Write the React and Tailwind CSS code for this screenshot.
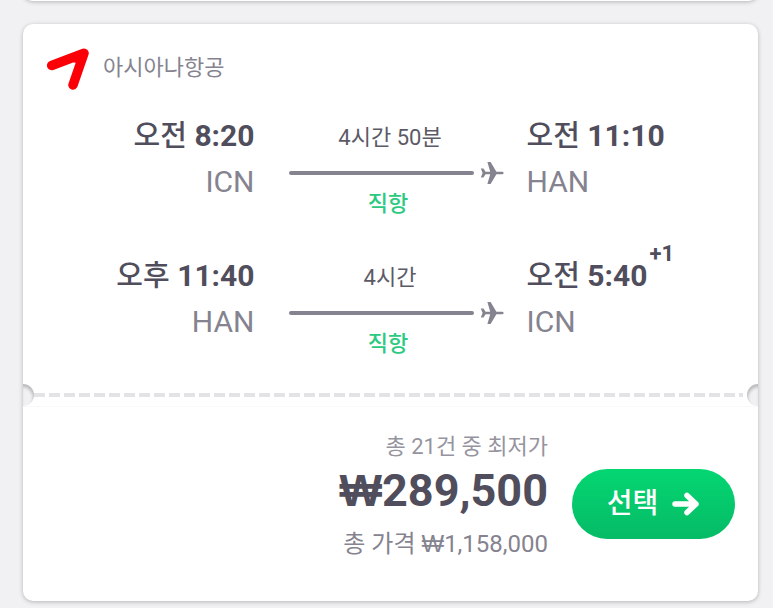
import React from "react";

const flights = [
  {
    departPeriod: "오전",
    departTime: "8:20",
    departCode: "ICN",
    duration: "4시간 50분",
    arrivePeriod: "오전",
    arriveTime: "11:10",
    arriveCode: "HAN",
  },
  {
    departPeriod: "오후",
    departTime: "11:40",
    departCode: "HAN",
    duration: "4시간",
    arrivePeriod: "오전",
    arriveTime: "5:40",
    arriveCode: "ICN",
    dayOffset: "+1",
  },
];

const AirlineLogo = () => (
  <svg width="44" height="44" viewBox="0 0 44 44" aria-hidden="true">
    <path
      d="M4.7 19.5L37 7.3L26 39"
      fill="none"
      stroke="#fb0007"
      strokeWidth="9.5"
      strokeLinecap="round"
      strokeLinejoin="round"
    />
    <path d="M20 14L37 7L30 28L29 17Z" fill="#fb0007" />
  </svg>
);

const PlaneIcon = () => (
  <svg width="24" height="26" viewBox="0 0 24 26" fill="#85838f" aria-hidden="true">
    <path d="M22.5 11.8H16.4L10.6 2H7.4L10.2 11.8H5.6L3.4 8.6H.8L2.6 13 .8 17.4H3.4L5.6 14.2H10.2L7.4 24H10.6L16.4 14.2H22.5C24 14.2 24 11.8 22.5 11.8Z" />
  </svg>
);

const ArrowIcon = () => (
  <svg width="28" height="24" viewBox="0 0 28 24" aria-hidden="true">
    <path
      d="M3 12H23M15 3.5L24 12L15 20.5"
      fill="none"
      stroke="#fff"
      strokeWidth="5.5"
      strokeLinecap="round"
      strokeLinejoin="round"
    />
  </svg>
);

const FlightTime = ({ period, time }) => (
  <>
    <span className="text-[29px] font-medium">{period}</span> {time}
  </>
);

const WonSign = () => <span className="font-['Liberation_Sans']">₩</span>;

const FlightRow = ({ flight }) => {
  return (
    <div className="grid grid-cols-[1fr_272px_1fr] whitespace-nowrap">
      <div className="text-right">
        <p className="h-[46px] text-[30px] leading-[46px] font-bold text-[#504e5c]">
          <FlightTime period={flight.departPeriod} time={flight.departTime} />
        </p>
        <p className="text-[30px] leading-[46px] text-[#85838f]">
          {flight.departCode}
        </p>
      </div>

      <div className="flex flex-col pl-[34px] pr-[23px]">
        <p className="h-[46px] pr-3 text-center text-[22px] leading-[50px] text-[#5c5a66]">
          {flight.duration}
        </p>
        <div className="flex h-7 items-center gap-[6px]">
          <div className="h-1 flex-1 rounded-full bg-[#85838f]" />
          <PlaneIcon />
        </div>
        <p className="pr-4 text-center text-[22px] leading-[34px] font-medium text-[#2cc981]">
          직항
        </p>
      </div>

      <div>
        <p className="h-[46px] text-[30px] leading-[46px] font-bold text-[#504e5c]">
          <span className="relative">
            <FlightTime period={flight.arrivePeriod} time={flight.arriveTime} />
            {flight.dayOffset && (
              <sup className="absolute -top-4 left-full ml-0.5 text-[22px] leading-6">
                {flight.dayOffset}
              </sup>
            )}
          </span>
        </p>
        <p className="text-[30px] leading-[46px] text-[#85838f]">
          {flight.arriveCode}
        </p>
      </div>
    </div>
  );
};

const Perforation = () => (
  <div className="flex h-[22px] items-center">
    <div className="h-full w-[11px] rounded-r-full bg-[#f1f1f3] shadow-[inset_-1px_3px_3px_#bdbdc1]" />
    <div className="mr-1 h-1 flex-1 bg-[repeating-linear-gradient(90deg,#e3e3e5_0_11px,transparent_11px_15px)]" />
    <div className="h-full w-[11px] rounded-l-full bg-[#f1f1f3] shadow-[inset_1px_3px_3px_#bdbdc1]" />
  </div>
);

const App = () => {
  return (
    <main className="flex min-h-screen flex-col bg-[#f1f1f3] pr-[15px] pb-[7px] pl-[23px] font-[Roboto,'Noto_Sans_CJK_KR',sans-serif]">
      {/* bottom edge of the previous ticket */}
      <div className="-mt-[31px] mb-[23px] h-8 shrink-0 rounded-[10px] bg-white shadow-[0_1px_4px_#b4b4b8]" />

      <article className="rounded-[10px] bg-white shadow-[0_1px_4px_#b4b4b8]">
        <header className="flex items-center gap-3 pt-[22px] pb-[23px] pl-6">
          <AirlineLogo />
          <h2 className="text-[22px] leading-8 text-[#85838f]">아시아나항공</h2>
        </header>

        <section className="flex flex-col gap-8 pb-[23px]">
          {flights.map((flight) => (
            <FlightRow flight={flight} key={flight.departTime} />
          ))}
        </section>

        <Perforation />

        <footer className="flex items-center justify-end gap-6 border-t border-[#f9f9fa] pt-6 pr-[23px] pb-8">
          <div className="text-right whitespace-nowrap">
            <p className="text-[22px] leading-8 text-[#96949e]">
              총 21건 중 최저가
            </p>
            <p className="h-14 text-[45px] leading-[56px] font-bold text-[#504e5c]">
              <WonSign />
              289,500
            </p>
            <p className="h-[50px] text-[24px] leading-[50px] text-[#85838f]">
              총 가격 <WonSign />
              1,158,000
            </p>
          </div>
          <button
            type="button"
            className="mt-2 flex h-[70px] w-[163px] items-center justify-center gap-3.5 rounded-full bg-linear-to-b from-[#04d672] to-[#06bb66] text-[28px] font-medium text-white"
          >
            선택
            <ArrowIcon />
          </button>
        </footer>
      </article>
    </main>
  );
};

export default App;
